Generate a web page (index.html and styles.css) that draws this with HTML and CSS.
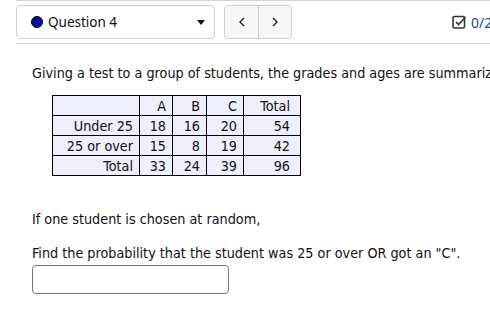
FILE: index.html
```html
<!DOCTYPE html>
<html>
<head>
<meta charset="utf-8">
<link rel="stylesheet" href="styles.css">
</head>
<body>
<div class="topbar">
  <div class="qselect">
    <span class="dot"></span>
    <span class="qlabel">Question 4</span>
    <svg class="caret" width="8" height="5" viewBox="0 0 8 5"><path d="M0 0H8L4 5Z" fill="#111"/></svg>
  </div>
  <div class="nav">
    <button class="navbtn"><svg width="8" height="10" viewBox="0 0 8 10"><path d="M6 1L2 5L6 9" fill="none" stroke="#222" stroke-width="1.4"/></svg></button>
    <button class="navbtn"><svg width="8" height="10" viewBox="0 0 8 10"><path d="M2 1L6 5L2 9" fill="none" stroke="#222" stroke-width="1.4"/></svg></button>
  </div>
  <div class="score">
    <svg width="15" height="14" viewBox="0 0 15 14"><rect x="1" y="1.5" width="11.5" height="11.5" rx="1.5" fill="none" stroke="#333" stroke-width="1.6"/><path d="M4 7L6.5 9.5L13.5 2" fill="none" stroke="#333" stroke-width="1.7"/></svg>
    <span class="scoretext">0/2</span>
  </div>
</div>
<div class="question">
  <p class="intro">Giving a test to a group of students, the grades and ages are summarized below</p>
  <table class="stats">
    <tr><th class="c0"></th><th class="c1">A</th><th class="c2">B</th><th class="c3">C</th><th class="c4">Total</th></tr>
    <tr><td class="c0">Under 25</td><td>18</td><td>16</td><td>20</td><td class="c4">54</td></tr>
    <tr><td class="c0">25 or over</td><td>15</td><td>8</td><td>19</td><td class="c4">42</td></tr>
    <tr><td class="c0">Total</td><td>33</td><td>24</td><td>39</td><td class="c4">96</td></tr>
  </table>
  <p class="line1">If one student is chosen at random,</p>
  <p class="line2">Find the probability that the student was 25 or over OR got an "C".</p>
  <input class="answer" type="text">
</div>
</body>
</html>
```
FILE: styles.css
```css
html, body {
  margin: 0;
  padding: 0;
  background: #fff;
  overflow: hidden;
  width: 490px;
  height: 315px;
}
body {
  font-family: "DejaVu Sans Condensed", "DejaVu Sans", sans-serif;
  font-stretch: condensed;
  color: #111;
}
.topbar {
  margin-left: 16px;
  width: 520px;
  border-top: 1px solid #d4d4d4;
  border-bottom: 1px solid #d4d4d4;
  padding: 4px 0 4px 0;
  display: flex;
  align-items: center;
  font-family: "Noto Sans", sans-serif;
  font-stretch: normal;
}
.qselect {
  width: 197px;
  height: 32px;
  border: 1px solid #d0d0d0;
  border-radius: 4px;
  display: flex;
  align-items: center;
}
.dot {
  width: 10px;
  height: 10px;
  border-radius: 50%;
  background: #0a0a9e;
  border: 1px solid #000;
  margin-left: 14px;
}
.qlabel {
  font-size: 13.5px;
  color: #111;
  margin-left: 5px;
  flex: 1;
}
.caret {
  margin-right: 9px;
}
.nav {
  margin-left: 9px;
  display: flex;
  border: 1px solid #d0d0d0;
  border-radius: 4px;
  background: #f7f7f7;
  height: 32px;
}
.navbtn {
  width: 33px;
  height: 32px;
  border: none;
  background: transparent;
  padding: 0;
  display: flex;
  align-items: center;
  justify-content: center;
}
.navbtn + .navbtn {
  border-left: 1px solid #d0d0d0;
}
.score {
  margin-left: 160px;
  display: flex;
  align-items: center;
  gap: 4px;
}
.scoretext {
  font-size: 14px;
  color: #1b4a86;
}
.question {
  padding-left: 32px;
  font-size: 14.25px;
  white-space: nowrap;
}
.intro {
  margin: 21px 0 0 0;
  line-height: 17px;
}
.stats {
  margin: 13px 0 0 20px;
  border-collapse: collapse;
  background: #eeeefc;
  font-size: 14.25px;
}
.stats th, .stats td {
  border: 1px solid #000;
  height: 19px;
  padding: 0 6px 0 4px;
  text-align: right;
  font-weight: normal;
  line-height: 18px;
}
.stats .c0 { width: 76px; }
.stats .c1 { width: 22px; }
.stats .c2 { width: 23px; }
.stats .c3 { width: 26px; }
.stats .c4 { width: 46px; padding-right: 10px; padding-left: 0; }
.line1 {
  margin: 35px 0 0 0;
  line-height: 17px;
}
.line2 {
  margin: 17px 0 0 0;
  line-height: 17px;
}
.answer {
  display: block;
  margin-top: 3px;
  width: 197px;
  height: 29px;
  box-sizing: border-box;
  border: 1px solid #777;
  border-radius: 4px;
}
```
